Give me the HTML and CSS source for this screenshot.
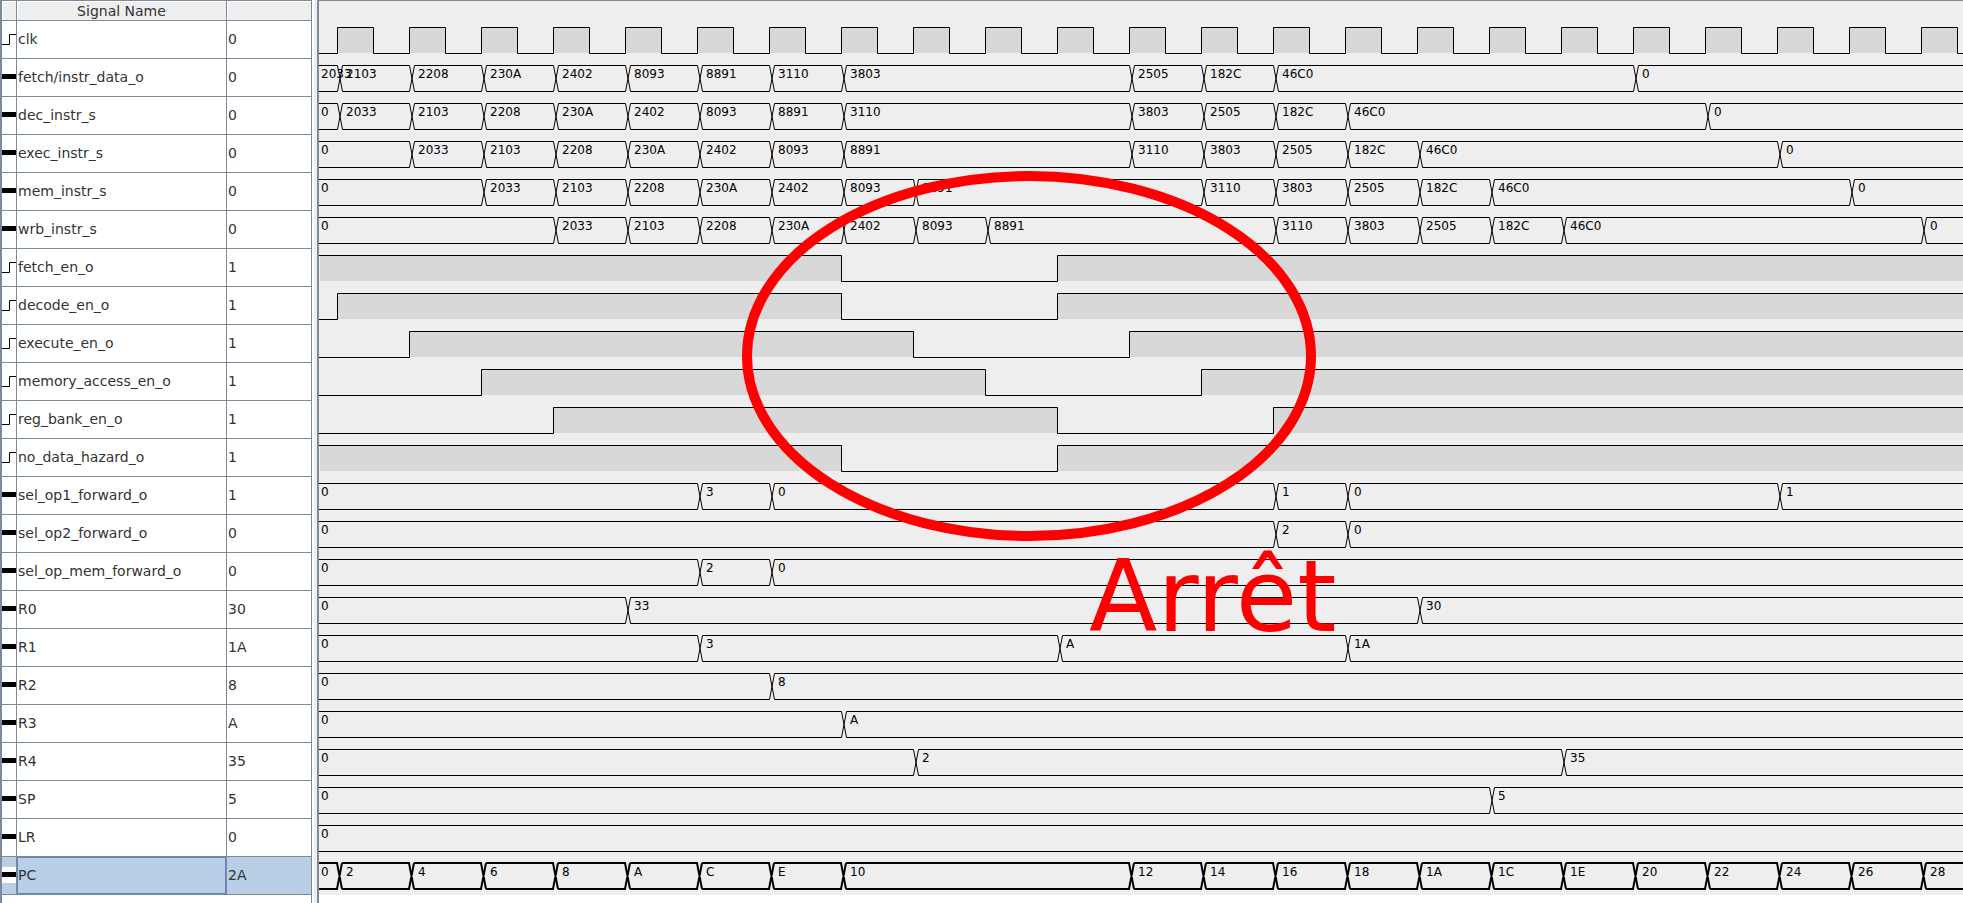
FILE: index.html
```html
<!DOCTYPE html>
<html lang="fr">
<head>
<meta charset="utf-8">
<title>Signal waveforms</title>
<link rel="stylesheet" href="styles.css">
</head>
<body>
<main class="viewer">
  <section class="signals">
    <table class="signal-table">
      <colgroup><col class="col-icon"><col class="col-name"><col class="col-value"></colgroup>
      <thead><tr><th></th><th scope="col">Signal Name</th><th></th></tr></thead>
      <tbody id="signal-rows"></tbody>
    </table>
  </section>
  <div class="divider"></div>
  <section class="waves">
    <div class="wave-rows" id="wave-rows"></div>
    <svg class="annotation" aria-label="Arrêt">
      <ellipse class="mark" cx="710" cy="355" rx="282" ry="180"/>
      <text class="mark-label" x="770" y="630">Arrêt</text>
    </svg>
  </section>
</main>
<script src="waves.js"></script>
</body>
</html>
```
FILE: styles.css
```css
* {
  box-sizing: border-box;
}

body {
  margin: 0;
  min-height: 100vh;
  display: flex;
  background: #fff;
  font-family: "DejaVu Sans", sans-serif;
  color: #333;
}

.viewer {
  flex: 1;
  display: flex;
  min-width: 0;
}

.signals {
  flex: none;
  width: 312px;
  border-top: 1px solid #7a8a99;
  border-left: 2px solid #7a8a99;
  border-right: 1px solid #7a8a99;
}

.signal-table {
  width: 100%;
  table-layout: fixed;
  border-collapse: separate;
  border-spacing: 0;
  font-size: 14px;
  line-height: 16px;
}

.col-icon { width: 15px; }
.col-name { width: 210px; }

.signal-table th {
  height: 20px;
  padding: 0;
  font-weight: normal;
  background: #eee;
  border-bottom: 1px solid #7a8a99;
  border-right: 1px solid #7a8a99;
  box-shadow: inset 1px 1px #fff;
}

.signal-table td {
  height: 38px;
  padding: 0 0 1px 1px;
  border-bottom: 1px solid #7a8a99;
  border-right: 1px solid #7a8a99;
  white-space: nowrap;
}

.signal-table th:last-child,
.signal-table td:last-child {
  border-right: 0;
}

.signal-table td.icon-cell {
  padding-left: 0;
}

.icon {
  display: block;
  width: 14px;
  height: 16px;
  background: #fff;
}

.selected td {
  background: #b8cfe5;
}

.selected .name-cell {
  box-shadow: inset 0 0 0 1px #6382bf;
}

.divider {
  flex: none;
  width: 5px;
  background: #eee;
  border-left: 2px solid #fff;
}

.waves {
  flex: 1;
  min-width: 0;
  position: relative;
  overflow: hidden;
  border-top: 1px solid #7a8a99;
  border-left: 2px solid #7a8a99;
}

.wave-rows {
  padding-top: 20px;
  background: #eee;
}

.wave {
  display: block;
  width: 100%;
  height: 38px;
}

.wave-line,
.icon-line {
  fill: none;
  stroke: #000;
  stroke-width: 1;
}

.bold .wave-line {
  stroke-width: 2;
}

.wave-fill {
  fill: #d8d8d8;
}

.wave-text {
  font-size: 12px;
  fill: #000;
}

.annotation {
  position: absolute;
  inset: 0;
  width: 100%;
  height: 100%;
}

.mark {
  fill: none;
  stroke: #f00;
  stroke-width: 10;
}

.mark-label {
  font-size: 100px;
  fill: #f00;
}
```
FILE: waves.js
```js
// Each signal: name, current value, kind, initial value, then changes as "clock edge:value".
const signals = [
  ["clk", "0", "clock", "0", ""],
  ["fetch/instr_data_o", "0", "bus", "2033", "0:2103 1:2208 2:230A 3:2402 4:8093 5:8891 6:3110 7:3803 11:2505 12:182C 13:46C0 18:0"],
  ["dec_instr_s", "0", "bus", "0", "0:2033 1:2103 2:2208 3:230A 4:2402 5:8093 6:8891 7:3110 11:3803 12:2505 13:182C 14:46C0 19:0"],
  ["exec_instr_s", "0", "bus", "0", "1:2033 2:2103 3:2208 4:230A 5:2402 6:8093 7:8891 11:3110 12:3803 13:2505 14:182C 15:46C0 20:0"],
  ["mem_instr_s", "0", "bus", "0", "2:2033 3:2103 4:2208 5:230A 6:2402 7:8093 8:8891 12:3110 13:3803 14:2505 15:182C 16:46C0 21:0"],
  ["wrb_instr_s", "0", "bus", "0", "3:2033 4:2103 5:2208 6:230A 7:2402 8:8093 9:8891 13:3110 14:3803 15:2505 16:182C 17:46C0 22:0"],
  ["fetch_en_o", "1", "bit", "1", "7:0 10:1"],
  ["decode_en_o", "1", "bit", "0", "0:1 7:0 10:1"],
  ["execute_en_o", "1", "bit", "0", "1:1 8:0 11:1"],
  ["memory_access_en_o", "1", "bit", "0", "2:1 9:0 12:1"],
  ["reg_bank_en_o", "1", "bit", "0", "3:1 10:0 13:1"],
  ["no_data_hazard_o", "1", "bit", "1", "7:0 10:1"],
  ["sel_op1_forward_o", "1", "bus", "0", "5:3 6:0 13:1 14:0 20:1"],
  ["sel_op2_forward_o", "0", "bus", "0", "13:2 14:0"],
  ["sel_op_mem_forward_o", "0", "bus", "0", "5:2 6:0"],
  ["R0", "30", "bus", "0", "4:33 15:30"],
  ["R1", "1A", "bus", "0", "5:3 10:A 14:1A"],
  ["R2", "8", "bus", "0", "6:8"],
  ["R3", "A", "bus", "0", "7:A"],
  ["R4", "35", "bus", "0", "8:2 17:35"],
  ["SP", "5", "bus", "0", "16:5"],
  ["LR", "0", "bus", "0", ""],
  ["PC", "2A", "bus", "0", "0:2 1:4 2:6 3:8 4:A 5:C 6:E 7:10 11:12 12:14 13:16 14:18 15:1A 16:1C 17:1E 18:20 19:22 20:24 21:26 22:28"]
];

const FIRST = 18, PERIOD = 72, HIGH = 6, LOW = 32, END = 4000;
const edge = k => FIRST + PERIOD * k;

function bitWave(start, changes) {
  let x = 0, level = start, fills = "";
  let d = `M0 ${(level === "1" ? HIGH : LOW) + 0.5}`;
  for (const [at, value] of [...changes, [END, level]]) {
    if (level === "1") fills += `<rect class="wave-fill" x="${x + 1}" y="${HIGH + 1}" width="${at - x - 1}" height="${LOW - HIGH - 1}"/>`;
    d += `H${at + 0.5}`;
    if (at < END) d += `V${(value === "1" ? HIGH : LOW) + 0.5}`;
    x = at;
    level = value;
  }
  return `${fills}<path class="wave-line" d="${d}"/>`;
}

function busWave(start, changes, selected) {
  const o = selected ? 0 : 0.5, t = HIGH + o, b = LOW + o;
  let d = "", x = 0, texts = `<text class="wave-text" x="2" y="19">${start}</text>`;
  for (const [at, value] of changes) {
    const left = at + o, right = left + 5;
    d += `M${x} ${t}H${left}L${right} ${b}M${x} ${b}H${left}L${right} ${t}`;
    x = right;
    texts += `<text class="wave-text" x="${at + 9}" y="19">${value}</text>`;
  }
  d += `M${x} ${t}H${END}M${x} ${b}H${END}`;
  return `<path class="wave-line" d="${d}"/>${texts}`;
}

const icons = {
  bit: '<path class="icon-line" d="M0 13.5H7.5V3.5H14"/>',
  bus: '<rect y="5" width="14" height="5"/>'
};

let rows = "", waves = "";
for (const [name, value, kind, start, list] of signals) {
  let changes = list ? list.split(" ").map(s => s.split(":")).map(([k, v]) => [edge(+k), v]) : [];
  if (kind === "clock") {
    for (let k = 0; k < 50; k++) changes.push([edge(k), "1"], [edge(k) + PERIOD / 2, "0"]);
  }
  const selected = name === "PC";
  rows += `<tr${selected ? ' class="selected"' : ""}><td class="icon-cell"><svg class="icon" viewBox="0 0 14 16">${icons[kind === "bus" ? "bus" : "bit"]}</svg></td><td class="name-cell">${name}</td><td>${value}</td></tr>`;
  waves += `<svg class="wave${selected ? " bold" : ""}">${kind === "bus" ? busWave(start, changes, selected) : bitWave(start, changes)}</svg>`;
}
document.getElementById("signal-rows").innerHTML = rows;
document.getElementById("wave-rows").innerHTML = waves;
```
